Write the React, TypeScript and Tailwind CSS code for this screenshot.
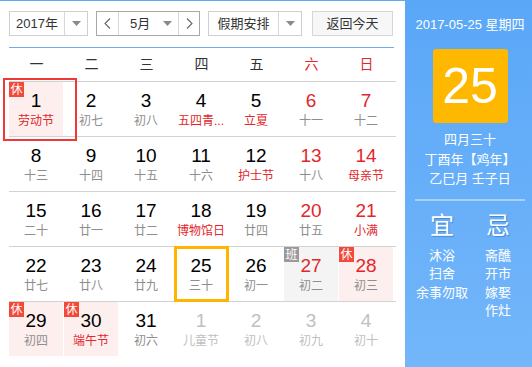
import React from 'react';

type Day = {
  n: number;
  lunar: string;
  redNum?: boolean;
  redText?: boolean;
  muted?: boolean;
  badge?: '休' | '班';
  today?: boolean;
  selected?: boolean;
};

const weeks: Day[][] = [
  [
    { n: 1, lunar: '劳动节', redText: true, badge: '休', selected: true },
    { n: 2, lunar: '初七' },
    { n: 3, lunar: '初八' },
    { n: 4, lunar: '五四青...', redText: true },
    { n: 5, lunar: '立夏', redText: true },
    { n: 6, lunar: '十一', redNum: true },
    { n: 7, lunar: '十二', redNum: true },
  ],
  [
    { n: 8, lunar: '十三' },
    { n: 9, lunar: '十四' },
    { n: 10, lunar: '十五' },
    { n: 11, lunar: '十六' },
    { n: 12, lunar: '护士节', redText: true },
    { n: 13, lunar: '十八', redNum: true },
    { n: 14, lunar: '母亲节', redNum: true, redText: true },
  ],
  [
    { n: 15, lunar: '二十' },
    { n: 16, lunar: '廿一' },
    { n: 17, lunar: '廿二' },
    { n: 18, lunar: '博物馆日', redText: true },
    { n: 19, lunar: '廿四' },
    { n: 20, lunar: '廿五', redNum: true },
    { n: 21, lunar: '小满', redNum: true, redText: true },
  ],
  [
    { n: 22, lunar: '廿七' },
    { n: 23, lunar: '廿八' },
    { n: 24, lunar: '廿九' },
    { n: 25, lunar: '三十', today: true },
    { n: 26, lunar: '初一' },
    { n: 27, lunar: '初二', redNum: true, badge: '班' },
    { n: 28, lunar: '初三', redNum: true, badge: '休' },
  ],
  [
    { n: 29, lunar: '初四', badge: '休' },
    { n: 30, lunar: '端午节', redText: true, badge: '休' },
    { n: 31, lunar: '初六' },
    { n: 1, lunar: '儿童节', muted: true },
    { n: 2, lunar: '初八', muted: true },
    { n: 3, lunar: '初九', muted: true },
    { n: 4, lunar: '初十', muted: true },
  ],
];

const weekdays = ['一', '二', '三', '四', '五', '六', '日'];

function Caret() {
  return (
    <svg width="9" height="5" viewBox="0 0 9 5">
      <path d="M0 0 L9 0 L4.5 5 Z" fill="#8a8a8a" />
    </svg>
  );
}

function Chevron({ dir }: { dir: 'l' | 'r' }) {
  return (
    <svg width="7" height="11" viewBox="0 0 7 11">
      <path
        d={dir === 'l' ? 'M6 0.5 L1 5.5 L6 10.5' : 'M1 0.5 L6 5.5 L1 10.5'}
        fill="none"
        stroke="#666"
        strokeWidth="1.1"
      />
    </svg>
  );
}

function Cell({ d }: { d: Day }) {
  let bg = '';
  if (d.badge === '休') bg = 'bg-[#fdefee]';
  if (d.badge === '班') bg = 'bg-[#f4f4f4]';

  const numColor = d.muted ? 'text-[#c0c0c0]' : d.redNum ? 'text-[#e3262b]' : 'text-black';
  const textColor = d.muted ? 'text-[#c0c0c0]' : d.redText ? 'text-[#e3262b]' : 'text-[#8e8e8e]';

  return (
    <div className="relative h-[54px] w-[55px] pr-px">
      <div className={`flex h-full flex-col items-center pt-[8px] ${bg}`}>
        <div className={`text-[19px] leading-[22px] ${numColor}`}>{d.n}</div>
        <div className={`mt-[1px] whitespace-nowrap text-[12px] leading-[16px] ${textColor}`}>{d.lunar}</div>
      </div>
      {d.badge && (
        <div
          className={`absolute left-0 top-0 flex h-[15px] w-[15px] items-center justify-center text-[12px] leading-none text-white ${
            d.badge === '休' ? 'bg-[#f2493a]' : 'bg-[#9a9a9a]'
          }`}
        >
          {d.badge}
        </div>
      )}
      {d.today && <div className="absolute left-0 top-[-1px] h-[56px] w-[55px] border-[3px] border-[#ffb500]" />}
      {d.selected && <div className="absolute left-[-6px] top-[-4px] h-[63px] w-[74px] border-2 border-[#f03838]" />}
    </div>
  );
}

export default function App() {
  return (
    <div
      className="flex h-[367px] w-[532px] overflow-hidden bg-white text-[#333]"
      style={{ fontFamily: '"Liberation Sans", "Noto Sans CJK SC", sans-serif' }}
    >
      {/* left: calendar */}
      <div className="w-[405px] border-t border-[#5ea9f5] px-[9px] pt-[10px]">
        <div className="flex h-[25px] text-[13px]">
          <div className="flex w-[79px] border border-[#cfcfcf]">
            <div className="flex w-[55px] items-center justify-center border-r border-[#d8d8d8]">2017年</div>
            <div className="flex flex-1 items-center justify-center">
              <Caret />
            </div>
          </div>
          <div className="ml-[8px] flex w-[104px] border border-[#a8a8a8]">
            <div className="flex w-[22px] items-center justify-center border-r border-[#d8d8d8]">
              <Chevron dir="l" />
            </div>
            <div className="flex w-[60px] items-center border-r border-[#d8d8d8] pl-[11px]">
              <span>5月</span>
              <span className="ml-[13px] flex">
                <Caret />
              </span>
            </div>
            <div className="flex flex-1 items-center justify-center">
              <Chevron dir="r" />
            </div>
          </div>
          <div className="ml-[8px] flex w-[94px] border border-[#cfcfcf]">
            <div className="flex w-[70px] items-center justify-center border-r border-[#d8d8d8]">假期安排</div>
            <div className="flex flex-1 items-center justify-center">
              <Caret />
            </div>
          </div>
          <div className="ml-[10px] flex w-[81px] items-center justify-center border border-[#d6d6d6] bg-[#f7f7f7]">
            返回今天
          </div>
        </div>

        <div className="mt-[11px] h-px w-[385px] bg-[#6aaef0]" />

        <div className="grid h-[33px] grid-cols-[repeat(7,55px)] items-center text-[14px]">
          {weekdays.map((w, i) => (
            <div key={w} className={`text-center ${i >= 5 ? 'text-[#e3262b]' : 'text-[#333]'}`}>
              {w}
            </div>
          ))}
        </div>

        {weeks.map((week, wi) => (
          <div key={wi} className="grid grid-cols-[repeat(7,55px)] border-t border-[#d2d2d2]">
            {week.map((d, di) => (
              <Cell key={di} d={d} />
            ))}
          </div>
        ))}
      </div>

      {/* right: day detail */}
      <div className="flex flex-1 flex-col items-center bg-gradient-to-b from-[#5aa7f8] to-[#73b6fa] pl-[3px] text-white">
        <div className="mt-[17px] text-[13px] leading-[16px]">2017-05-25 星期四</div>
        <div className="mt-[16px] flex h-[74px] w-[75px] items-center justify-center rounded-[3px] bg-[#ffb800] text-[50px] leading-none">
          25
        </div>
        <div className="mt-[7px] flex flex-col items-center text-[13px] leading-[19.5px]">
          <div>四月三十</div>
          <div>丁酉年【鸡年】</div>
          <div>乙巳月 壬子日</div>
        </div>
        <div className="mt-[10px] h-[2px] w-[110px] bg-[#a9d0f8]" />
        <div className="mt-[11px] grid w-[112px] grid-cols-2 text-center">
          <div className="flex flex-col items-center">
            <div className="text-[24px] leading-[28px] [text-shadow:1px_1px_1px_rgba(0,60,140,0.35)]">宜</div>
            <div className="mt-[7px] text-[13px] leading-[18.5px]">
              <div>沐浴</div>
              <div>扫舍</div>
              <div className="whitespace-nowrap">余事勿取</div>
            </div>
          </div>
          <div className="flex flex-col items-center">
            <div className="text-[24px] leading-[28px] [text-shadow:1px_1px_1px_rgba(0,60,140,0.35)]">忌</div>
            <div className="mt-[7px] text-[13px] leading-[18.5px]">
              <div>斋醮</div>
              <div>开市</div>
              <div>嫁娶</div>
              <div>作灶</div>
            </div>
          </div>
        </div>
      </div>
    </div>
  );
}
